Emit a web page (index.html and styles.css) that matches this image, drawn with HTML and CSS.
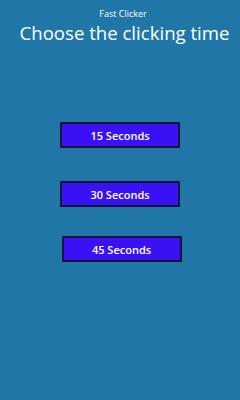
FILE: index.html
```html
<!DOCTYPE html>
<html lang="en">
<head>
    <meta charset="UTF-8">
    <meta name="viewport" content="width=device-width, initial-scale=1.0">
    <title>Fast Clicker</title>
    <link rel="stylesheet" href="styles.css">
</head>
<body>
    <div class="page">
        <div class="header">
            <div class="app-name">Fast Clicker</div>
            <h1>Choose the clicking time</h1>
        </div>

        <div class="options">
            <button class="btn">15 Seconds</button>
            <button class="btn">30 Seconds</button>
            <button class="btn third">45 Seconds</button>
        </div>
    </div>
</body>
</html>
```

FILE: styles.css
```css
* {
    margin: 0;
    padding: 0;
    box-sizing: border-box;
}

html, body {
    height: 100%;
}

body {
    font-family: "Open Sans", "Noto Sans", sans-serif;
    background: #2176a8;
    color: white;
}

.page {
    padding-top: 8px;
}

.header {
    text-align: center;
}

.app-name {
    font-size: 9px;
    line-height: 12px;
    padding-left: 6px;
}

.header h1 {
    font-weight: normal;
    font-size: 18.6px;
    line-height: 26px;
    padding-left: 9px;
}

.options {
    display: flex;
    flex-direction: column;
    align-items: center;
    gap: 33px;
    margin-top: 76px;
}

.btn {
    width: 120px;
    height: 26px;
    background: #3a10f5;
    border: 2px solid #151538;
    color: white;
    font-family: "Open Sans", "Noto Sans", sans-serif;
    font-weight: 600;
    font-size: 11px;
}

.btn.third {
    margin-top: -4px;
    margin-left: 3px;
}
```
